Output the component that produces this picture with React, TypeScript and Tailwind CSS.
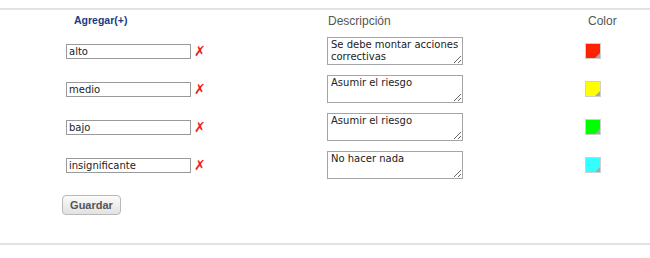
const rows = [
  { name: 'alto', desc: 'Se debe montar acciones correctivas', color: 'bg-[#ff2200]' },
  { name: 'medio', desc: 'Asumir el riesgo', color: 'bg-[#ffff00]' },
  { name: 'bajo', desc: 'Asumir el riesgo', color: 'bg-[#00ff00]' },
  { name: 'insignificante', desc: 'No hacer nada', color: 'bg-[#33ffff]' },
];

function Swatch({ color }: { color: string }) {
  return (
    <div className={`relative h-[16px] w-[16px] border border-[#d0d0d0] ${color}`}>
      <svg className="absolute bottom-0 right-0" width="5" height="5" viewBox="0 0 5 5">
        <polygon points="5,0 5,5 0,5" fill="#a8a8a8" />
      </svg>
    </div>
  );
}

export default function App() {
  return (
    <div className="h-[258px] w-[650px] bg-white pt-[8px] font-['DejaVu_Sans',sans-serif] text-[10px] text-[#222]">
      <div className="border-t-2 border-[#e2e2e2]" />
      <div className="grid h-[22px] grid-cols-[327px_258px_65px] items-center font-['Liberation_Sans',Arial,sans-serif]">
        <a href="#" className="pl-[74px] text-[10.5px] font-bold text-[#1a3c88]">
          Agregar(+)
        </a>
        <div className="pl-px text-[12px] text-[#555]">Descripción</div>
        <div className="pl-[3px] text-[12px] text-[#555]">Color</div>
      </div>
      {rows.map((r) => (
        <div key={r.name} className="grid h-[38px] grid-cols-[327px_258px_65px] items-center">
          <div className="flex items-center pl-[66px]">
            <input
              defaultValue={r.name}
              className="h-[15px] w-[125px] border border-[#9a9a9a] bg-white px-[2px] text-[10px] leading-[13px] text-[#222] outline-none"
            />
            <span className="ml-[3px] text-[14px] font-bold leading-none text-[#f0201c]">✗</span>
          </div>
          <textarea
            defaultValue={r.desc}
            className="h-[28px] w-[136px] border border-[#a5a5a5] bg-white px-[3px] py-px text-[10px] leading-[12px] text-[#222] outline-none"
          />
          <Swatch color={r.color} />
        </div>
      ))}
      <button className="ml-[62px] mt-[11px] h-[20px] w-[59px] rounded-[4px] border border-[#b9b9b9] bg-gradient-to-b from-[#fbfbfb] to-[#e2e2e2] font-['Liberation_Sans',Arial,sans-serif] text-[11px] font-bold text-[#555]">
        Guardar
      </button>
      <div className="mt-[28px] border-t-2 border-[#e2e2e2]" />
    </div>
  );
}
